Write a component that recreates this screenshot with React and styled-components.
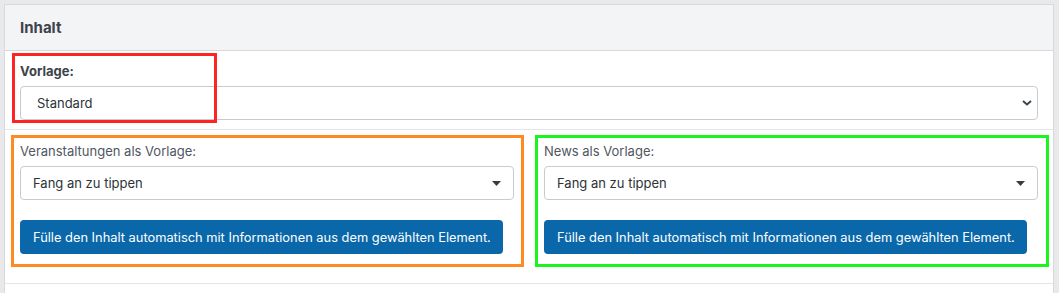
import React from 'react';
import styled, { createGlobalStyle } from 'styled-components';

const GlobalStyle = createGlobalStyle`
  body {
    margin: 0;
    background: #e9e9eb;
    font-family: Inter, 'Liberation Sans', Arial, sans-serif;
  }
`;

const Page = styled.div`
  padding: 4px 5px 0 4px;
  height: 293px;
  box-sizing: border-box;
  overflow: hidden;
`;

const Panel = styled.section`
  background: #fff;
  border: 1px solid #d8d9dc;
  border-bottom: none;
  height: 300px;
`;

const Header = styled.header`
  height: 45px;
  display: flex;
  align-items: center;
  padding: 0 15px;
  background: #f3f4f5;
  border-bottom: 1px solid #d8d9dc;
  font-size: 15px;
  font-weight: 700;
  color: #3c434a;
`;

const Section = styled.div`
  position: relative;
  padding: ${p => p.$pad};
  border-bottom: 1px solid #e4e5e7;
`;

const Label = styled.div`
  font-size: 13px;
  line-height: 17px;
  color: ${p => (p.$bold ? '#3c434a' : '#50575e')};
  font-weight: ${p => (p.$bold ? 700 : 400)};
  margin-bottom: 6px;
`;

const Select = styled.div`
  height: 34px;
  box-sizing: border-box;
  border: 1px solid #c9cacd;
  border-radius: 4px;
  display: flex;
  align-items: center;
  justify-content: space-between;
  padding: 0 ${p => p.$right}px 0 ${p => p.$left}px;
  font-size: 13px;
  color: #2c3338;
  background: #fff;
`;

const Row = styled.div`
  display: grid;
  grid-template-columns: 1fr 1fr;
  column-gap: 30px;
`;

const Column = styled.div`
  position: relative;
`;

const Button = styled.button`
  margin-top: 20px;
  height: 34px;
  padding: 0 12px 0 13px;
  border: none;
  border-radius: 4px;
  background: #0a68aa;
  color: #fff;
  font-family: inherit;
  font-size: 12.85px;
  cursor: pointer;
`;

const Mark = styled.div`
  position: absolute;
  inset: ${p => p.$inset};
  width: ${p => p.$w || 'auto'};
  height: ${p => p.$h || 'auto'};
  border: 3px solid ${p => p.$color};
  box-sizing: border-box;
  pointer-events: none;
`;

const Chevron = () => (
  <svg width="10" height="6" viewBox="0 0 10 6">
    <path d="M1 1l4 3.5L9 1" fill="none" stroke="#3c434a" strokeWidth="2" />
  </svg>
);

const Caret = () => (
  <svg width="9" height="5" viewBox="0 0 9 5">
    <path d="M0 0h9L4.5 5z" fill="#3c3c3c" />
  </svg>
);

function Picker({ label }) {
  return (
    <>
      <Label>{label}</Label>
      <Select $left={12} $right={12}>
        <span>Fang an zu tippen</span>
        <Caret />
      </Select>
      <Button>Fülle den Inhalt automatisch mit Informationen aus dem gewählten Element.</Button>
    </>
  );
}

export default function App() {
  return (
    <Page>
      <GlobalStyle />
      <Panel>
        <Header>Inhalt</Header>
        <Section $pad="12px 15px 9px">
          <Label $bold>Vorlage:</Label>
          <Select $left={16} $right={5}>
            <span>Standard</span>
            <Chevron />
          </Select>
          <Mark $color="#ff2424" $inset="2px auto auto 7px" $w="205px" $h="70px" />
        </Section>
        <Section $pad="13px 15px 29px">
          <Row>
            <Column>
              <Picker label="Veranstaltungen als Vorlage:" />
              <Mark $color="#ff8a22" $inset="-8px -10px -13px -9px" />
            </Column>
            <Column>
              <Picker label="News als Vorlage:" />
              <Mark $color="#1cf51c" $inset="-8px -11px -13px -9px" />
            </Column>
          </Row>
        </Section>
      </Panel>
    </Page>
  );
}
